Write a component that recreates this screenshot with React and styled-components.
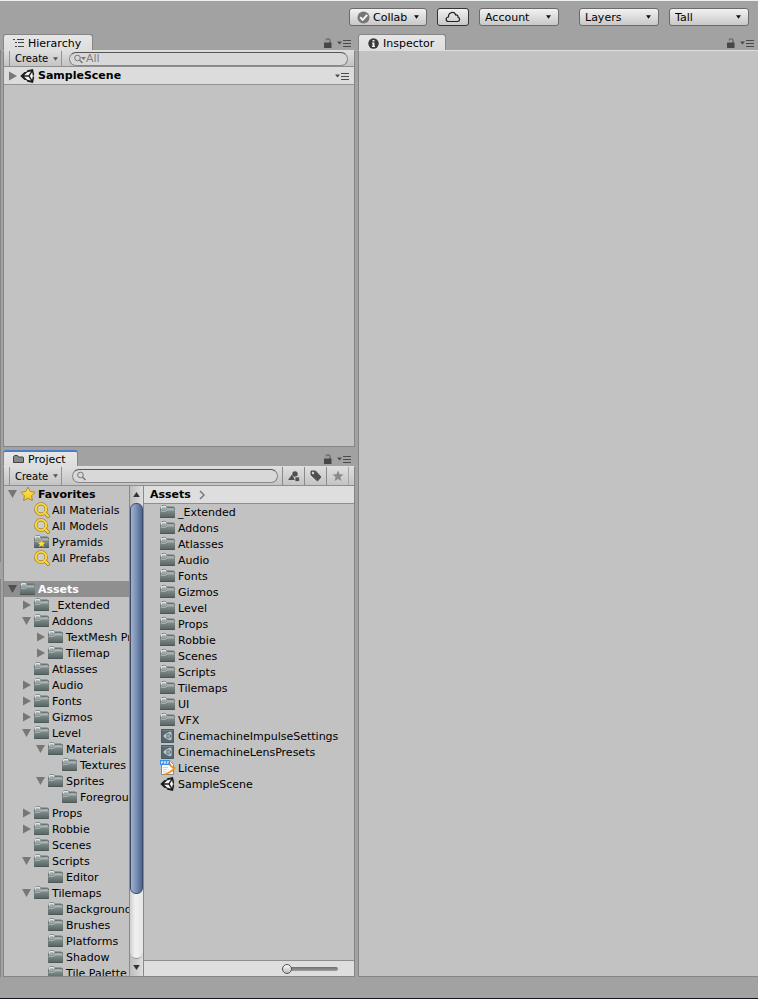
import React from "react";
import styled, { createGlobalStyle, css } from "styled-components";

const GlobalStyle = createGlobalStyle`
  * {
    box-sizing: border-box;
  }
  body {
    margin: 0;
    background: #a2a2a2;
  }
  body, button, input, select {
    font-family: "DejaVu Sans", Verdana, sans-serif;
    font-size: 11px;
    color: #000;
  }
  h1, h2, ul {
    margin: 0;
    padding: 0;
    font-size: 11px;
    list-style: none;
  }
  svg {
    display: block;
    flex: none;
  }
`;

const Editor = styled.div`
  display: grid;
  grid-template-rows: 33px minmax(0, 1fr) 22px;
  height: 100vh;
  border-top: 1px solid #eef0f0;
  background: #a2a2a2;
`;

const TopBar = styled.header`
  display: flex;
  justify-content: flex-end;
  align-items: center;
  gap: 10px;
  padding: 0 9px 1px 0;
`;

const Spacer = styled.span`
  width: 0;
`;

const Workspace = styled.main`
  display: grid;
  grid-template-columns: 3px minmax(0, 352fr) minmax(0, 403fr);
`;

const Footer = styled.footer`
  border-bottom: 1px solid #10141f;
`;

const DockEdge = styled.div`
  display: grid;
  grid-template-rows: 512fr 398fr;
  row-gap: 17px;
  padding-top: 16px;
`;

const DockPane = styled.div`
  width: 1px;
  background: #858585;
`;

const LeftColumn = styled.div`
  display: grid;
  grid-template-rows: minmax(0, 413fr) minmax(0, 527fr);
  row-gap: 3px;
  min-height: 0;
`;

const RightColumn = styled.div`
  display: grid;
  min-height: 0;
  padding-left: 3px;
`;

const Panel = styled.section`
  display: grid;
  grid-template-rows: 16px minmax(0, 1fr);
  min-width: 0;
  min-height: 0;
`;

const PanelBody = styled.div`
  display: flex;
  flex-direction: column;
  min-height: 0;
  min-width: 0;
  border: 1px solid #858585;
  border-top-color: #dedede;
  border-right-width: ${props => (props.$open ? "0" : "1px")};
  background: #c2c2c2;
`;

const TabStrip = styled.div`
  display: flex;
  align-items: flex-end;
  padding-right: 4px;
`;

const Tab = styled.h2`
  display: flex;
  align-items: center;
  gap: 4px;
  height: 16px;
  min-width: ${props => props.$width};
  padding: ${props => (props.$active ? "0" : "1px")} 8px 0 9px;
  border: 1px solid #868686;
  border-top: ${props => (props.$active ? "2px solid #4b7cc4" : "1px solid #868686")};
  border-bottom: 0;
  border-radius: 3px 3px 0 0;
  background: linear-gradient(#e6e6e6, #dedede);
  font-weight: normal;
  white-space: nowrap;
`;

const TabTools = styled.div`
  display: flex;
  align-items: center;
  gap: 5px;
  height: 14px;
  margin-left: auto;
`;

const PlainButton = styled.button`
  display: flex;
  padding: 0;
  border: 0;
  background: none;
`;

const Toolbar = styled.div`
  display: flex;
  align-items: center;
  flex: none;
  height: ${props => props.$height};
  padding-left: 5px;
  border-bottom: 1px solid #8e8e8e;
  background: linear-gradient(#dedede, #c4c4c4);
`;

const raised = css`
  height: 18px;
  border: 1px solid #6b6b6b;
  border-radius: 3px;
  background: linear-gradient(#f2f2f2, #c8c8c8);
`;

const CloudButton = styled.button`
  ${raised}
  display: flex;
  align-items: center;
  justify-content: center;
  width: 32px;
  padding: 0;
  border-color: #333;
`;

const SelectWrap = styled.label`
  position: relative;
  display: flex;
  align-items: center;
  height: 100%;
`;

const BigSelectWrap = styled(SelectWrap)`
  width: ${props => props.$width};
  height: 18px;
`;

const BigSelect = styled.select`
  ${raised}
  appearance: none;
  width: 100%;
  padding: 0 0 0 ${props => (props.$icon ? "23px" : "5px")};
`;

const SmallSelect = styled.select`
  appearance: none;
  width: 53px;
  height: 100%;
  padding: 0 0 0 5px;
  border: 1px solid #929292;
  border-width: 0 1px;
  border-radius: 0;
  background: none;
  font-size: 10px;
`;

const SelectIcon = styled.span`
  position: absolute;
  left: 8px;
  pointer-events: none;
`;

const SelectCaret = styled.span`
  position: absolute;
  right: ${props => props.$right};
  pointer-events: none;
`;

const SearchBox = styled.label`
  display: flex;
  align-items: center;
  flex: 1;
  min-width: 0;
  height: 14px;
  margin: 0 ${props => props.$right} 0 ${props => props.$left};
  padding-left: 4px;
  border: 1px solid #888;
  border-top-color: #555;
  border-radius: 7px;
  background: #d8d8d8;
`;

const SearchInput = styled.input`
  flex: 1;
  min-width: 0;
  height: 12px;
  padding: 0;
  border: 0;
  outline: 0;
  background: none;

  &::placeholder {
    color: #808080;
    opacity: 1;
  }
`;

const FilterButton = styled.button`
  display: flex;
  align-items: center;
  justify-content: center;
  width: 22px;
  height: 100%;
  padding: 0;
  border: 0;
  border-left: 1px solid #8a8a8a;
  background: none;
`;

const ToolbarEnd = styled.span`
  width: 6px;
  height: 100%;
  border-left: 1px solid #a6a6a6;
`;

const SceneRow = styled.div`
  display: flex;
  align-items: center;
  flex: none;
  height: 18px;
  padding: 0 5px 0 4px;
  border-bottom: 1px solid #939393;
  background: #dcdcdc;
  font-weight: bold;
`;

const ProjectSplit = styled.div`
  display: grid;
  grid-template-columns: minmax(0, 125fr) 15px minmax(0, 210fr);
  flex: 1;
  min-height: 0;
`;

const Tree = styled.ul`
  min-height: 0;
  overflow: hidden;
`;

const TreeRow = styled.li`
  display: flex;
  align-items: center;
  height: 16px;
  margin-top: ${props => (props.$root ? "15px" : "0")};
  padding-left: ${props => 4 + props.$level * 14}px;
  background: ${props => (props.$selected ? "#8f8f8f" : "none")};
  color: ${props => (props.$selected ? "#fff" : "#000")};
  font-weight: ${props => (props.$level === 0 ? "bold" : "normal")};
  white-space: nowrap;
`;

const ArrowSlot = styled.span`
  width: 12px;
  flex: none;
`;

const IconSlot = styled.span`
  display: flex;
  align-items: center;
  width: 16px;
  height: 16px;
  margin-right: 2px;
  flex: none;
`;

const ScrollTrack = styled.div`
  display: flex;
  flex-direction: column;
  min-height: 0;
  border: 1px solid #8a8a8a;
  border-width: 0 1px;
  background: linear-gradient(90deg, #bdbdbd, #dedede);
`;

const ScrollButton = styled.button`
  display: flex;
  align-items: center;
  justify-content: center;
  flex: none;
  height: 17px;
  padding: 0;
  border: 0;
  background: none;
`;

const ScrollWell = styled.div`
  flex: 1;
  min-height: 0;
  border: 1px solid #909090;
  border-width: 0 0 1px;
  border-radius: 7px;
  background: linear-gradient(90deg, #cfcfcf, #f0f0f0 40%, #e6e6e6);
`;

const ScrollThumb = styled.div`
  height: 86%;
  border: 1px solid #3b4c6b;
  border-radius: 6px;
  background: linear-gradient(90deg, #a2b2cb, #8095b7 40%, #4d6590);
`;

const AssetPane = styled.div`
  display: flex;
  flex-direction: column;
  min-width: 0;
  min-height: 0;
`;

const Breadcrumb = styled.h1`
  display: flex;
  align-items: center;
  gap: 8px;
  flex: none;
  height: 18px;
  padding-left: 6px;
  border-bottom: 1px solid #8e8e8e;
  background: #dedede;
`;

const AssetList = styled.ul`
  flex: 1;
  min-height: 0;
  overflow: hidden;
`;

const AssetRow = styled.li`
  display: flex;
  align-items: center;
  height: 16px;
  padding-left: 16px;
  white-space: nowrap;
`;

const AssetFooter = styled.div`
  display: flex;
  align-items: center;
  justify-content: flex-end;
  flex: none;
  height: 16px;
  padding-right: 16px;
  border-top: 1px solid #8e8e8e;
  background: #dedede;
`;

const ZoomSlider = styled.input`
  appearance: none;
  width: 56px;
  height: 12px;
  margin: 0;
  background: none;

  &::-webkit-slider-runnable-track {
    height: 4px;
    border-radius: 2px;
    background: linear-gradient(#6e6e6e, #9e9e9e);
  }
  &::-webkit-slider-thumb {
    appearance: none;
    width: 10px;
    height: 10px;
    margin-top: -3px;
    border: 1px solid #555;
    border-radius: 50%;
    background: linear-gradient(#fafafa, #bcbcbc);
  }
`;

const Caret = ({ size = 6, color = "#111" }) => (
  <svg width={size} height="4" viewBox="0 0 6 4">
    <path d="M0 0h6L3 4z" fill={color} />
  </svg>
);

const Arrow = ({ open, dark }) => (
  <svg width="10" height="10" viewBox="0 0 10 10">
    <path d={open ? "M0 1h9L4.500 9z" : "M1 .5v9L9 5z"} fill={dark ? "#505050" : "#777"} />
  </svg>
);

const FolderIcon = ({ starred }) => (
  <svg width="16" height="16" viewBox="0 0 16 16">
    <defs>
      <linearGradient id="folderFront" x1="0" y1="0" x2="0" y2="1">
        <stop offset="0" stopColor="#8b9696" />
        <stop offset="1" stopColor="#5a6767" />
      </linearGradient>
    </defs>
    <path d="M.5 13V4L2 1.500h3.500l1 1.500h7l1 1v9z" fill="#6d7878" stroke="#687373" />
    <path d="M1 5l1-2.500h3.300l1 1.500H14v2H1z" fill="#9ea8a8" />
    <path d="M1 4.500 2 2.500h3.300l.8 1.200" fill="none" stroke="#e2e5e5" strokeWidth="1.400" />
    <path d="M0 6.500h5.500L7 5h8v8H0z" fill="url(#folderFront)" />
    <path d="M1 7.200h4.700L7 5.800h7" fill="none" stroke="#b8c2c2" strokeWidth="1" />
    <path d="M0 13h15v.6l-.5.400H.5L0 13.600z" fill="#4d5959" />
    {starred && (
      <path
        d="m7.500 5.500 1.200 2.700 2.900.3-2.200 1.900.7 2.900-2.600-1.500-2.600 1.500.7-2.900-2.200-1.900 2.900-.3z"
        fill="#ffdc4a"
        stroke="#8d8242"
        strokeWidth=".5"
      />
    )}
  </svg>
);

const StarIcon = () => (
  <svg width="16" height="16" viewBox="0 0 16 16">
    <defs>
      <linearGradient id="starFill" x1="0" y1="0" x2="0" y2="1">
        <stop offset="0" stopColor="#ffec5c" />
        <stop offset="1" stopColor="#f8c416" />
      </linearGradient>
    </defs>
    <path
      d="m8 1 2.200 4.500 4.900.7-3.500 3.500.8 4.900L8 12.300l-4.400 2.300.8-4.900L.9 6.200l4.900-.7z"
      fill="url(#starFill)"
      stroke="#a88c3c"
      strokeLinejoin="round"
    />
  </svg>
);

const QueryIcon = () => (
  <svg width="16" height="16" viewBox="0 0 16 16" fill="none">
    <path d="m10.800 10.800 3.200 3.200" stroke="#94752a" strokeWidth="3.600" strokeLinecap="round" />
    <circle cx="7" cy="7" r="5.200" fill="#cfcfca" stroke="#94752a" strokeWidth="3.300" />
    <path d="m10.500 10.500 3.500 3.500" stroke="#fbd437" strokeWidth="2.400" strokeLinecap="round" />
    <circle cx="7" cy="7" r="5.200" stroke="#fbd437" strokeWidth="2.100" />
  </svg>
);

const UnityShape = ({ base, face }) => (
  <>
    <path d="M13 1 7.300 2.300 6.300 4H4.500L.3 8l4.200 4h1.800l1 1.700L13 15l1.200-5.500L13.300 8l.9-1.500z" fill={base} />
    <path d="M7.300 4.300 11 3.500 8.600 7.200H4.200z" fill={face} />
    <path d="M4.200 8.800h4.400l2.400 3.700-3.700-.8z" fill={face} />
    <path d="m12.100 4.300.8 3.700-.8 3.700L9.800 8z" fill={face} />
  </>
);

const UnityIcon = () => (
  <svg width="16" height="16" viewBox="0 0 16 16">
    <UnityShape base="#1c1c1c" face="#f7f7f7" />
  </svg>
);

const PresetIcon = () => (
  <svg width="16" height="16" viewBox="0 0 16 16">
    <path d="M1.500 1.500h12v13h-12z" fill="#56676f" stroke="#4a5a61" />
    <path d="M2 2.500h11" stroke="#6f8087" />
    <g transform="translate(3 3) scale(.62)">
      <UnityShape base="#c0cbcf" face="#5d6e75" />
    </g>
  </svg>
);

const DocumentIcon = () => (
  <svg width="16" height="16" viewBox="0 0 16 16">
    <path d="M1.500 1.500h9l3 3v10h-12z" fill="#fafafa" stroke="#8a8a8a" />
    <path d="M3 7.500h5M3 9.500h4M3 11.500h3" stroke="#cdd5dd" />
    <path d="M9 3c1 2.500 2.800 4.200 5.500 5C12.500 11 9 13 4 14.500" stroke="#ea8a1a" strokeWidth="1.800" fill="none" />
    <path d="M5 13.500c4-1.300 6.500-3 8-5" stroke="#fbc95a" fill="none" />
    <path d="M0 0h10v5H0z" fill="#3f8fe6" />
    <path d="M1.500 3.800V1.500H3v1.200H1.500M4.500 1.500v2h1.200v-2zM7.500 3.800V1.500H9M7.500 2.700h1.200" stroke="#e4f0fd" strokeWidth=".8" fill="none" />
  </svg>
);

const LockIcon = () => (
  <svg width="8" height="10" viewBox="0 0 8 10">
    <path d="M2 2.500C2 .3 6 .1 6 2.500V5" fill="none" stroke="#606060" strokeWidth="1.200" />
    <path d="M0 4.500h7.500V10H0z" fill="#474747" />
  </svg>
);

const MenuIcon = () => (
  <svg width="14" height="8" viewBox="0 0 14 8">
    <path d="M0 2.500h5l-2.500 3z" fill="#4a4a4a" />
    <path d="M6 1.500h8M6 4.500h8M6 7.500h8" stroke="#4a4a4a" />
  </svg>
);

const SearchIcon = ({ menu }) => (
  <svg width={menu ? 12 : 10} height="10" viewBox={menu ? "0 0 12 10" : "0 0 10 10"} fill="none">
    <circle cx="3.500" cy="4" r="2.800" stroke="#777" />
    <path d="m5.500 6 3 3" stroke="#777" strokeWidth="1.500" />
    {menu && <path d="M7 3h5L9.500 6z" fill="#777" />}
  </svg>
);

const HierarchyIcon = () => (
  <svg width="11" height="10" viewBox="0 0 11 10" stroke="#444">
    <path d="M0 1.500h2M4 1.500h7M2 4.500h2M5 4.500h6M2 8.500h2M5 8.500h6" />
  </svg>
);

const InspectorIcon = () => (
  <svg width="11" height="11" viewBox="0 0 11 11">
    <circle cx="5.500" cy="5.500" r="5.200" fill="#383838" />
    <path d="M4.500 2h2v1.500h-2zM4 4.500h2.500V8H7v1H4V8h.5V5.500H4z" fill="#eee" />
  </svg>
);

const ProjectIcon = () => (
  <svg width="11" height="10" viewBox="0 0 11 10">
    <path d="M.5 8.500v-6l1-1h3l1 1.500h4.500l.5.500v5z" fill="#888" stroke="#444" />
  </svg>
);

const CollabIcon = () => (
  <svg width="13" height="13" viewBox="0 0 13 13">
    <circle cx="6.500" cy="6.500" r="6" fill="#777" />
    <path d="m3.200 6.300 2.500 2.600 4.500-5" fill="none" stroke="#f5f5f5" strokeWidth="2" />
  </svg>
);

const CloudIcon = () => (
  <svg width="16" height="12" viewBox="0 0 16 12">
    <path
      d="M3.700 10.500C.3 10.500.3 6.300 3.500 6 3.200 1.200 9.300-.3 10.700 4c2.300-.3 2.500 1.700 2.400 2.400 2.300.5 1.900 4.100-.6 4.100z"
      fill="none"
      stroke="#222"
      strokeWidth="1.200"
    />
  </svg>
);

const TypeFilterIcon = () => (
  <svg width="12" height="11" viewBox="0 0 12 11" fill="#505050">
    <path d="M4 3.500 7 9H0z" />
    <circle cx="7" cy="3" r="2.700" />
    <path d="M7 6h4.500v4.500H7z" stroke="#d0d0d0" strokeWidth=".7" />
  </svg>
);

const LabelFilterIcon = () => (
  <svg width="12" height="12" viewBox="0 0 12 12">
    <path d="M1 1h4.500L11 7l-3.500 4L1 5z" fill="#505050" stroke="#505050" strokeLinejoin="round" />
    <circle cx="3" cy="3" r="1.200" fill="#d5d5d5" />
  </svg>
);

const SaveFilterIcon = () => (
  <svg width="12" height="12" viewBox="0 0 12 12">
    <path d="m6 .5 1.500 3.800 4 .2-3.100 2.600 1 4L6 8.900l-3.400 2.200 1-4L.5 4.500l4-.2z" fill="#8b8b8b" />
  </svg>
);

const icons = {
  folder: <FolderIcon />,
  saved: <FolderIcon starred />,
  star: <StarIcon />,
  query: <QueryIcon />,
  scene: <UnityIcon />,
  preset: <PresetIcon />,
  document: <DocumentIcon />
};

// [name, level, arrow, icon]
const tree = [
  ["Favorites", 0, "open", "star"],
  ["All Materials", 1, "", "query"],
  ["All Models", 1, "", "query"],
  ["Pyramids", 1, "", "saved"],
  ["All Prefabs", 1, "", "query"],
  ["Assets", 0, "open", "folder"],
  ["_Extended", 1, "closed", "folder"],
  ["Addons", 1, "open", "folder"],
  ["TextMesh Pro", 2, "closed", "folder"],
  ["Tilemap", 2, "closed", "folder"],
  ["Atlasses", 1, "", "folder"],
  ["Audio", 1, "closed", "folder"],
  ["Fonts", 1, "closed", "folder"],
  ["Gizmos", 1, "closed", "folder"],
  ["Level", 1, "open", "folder"],
  ["Materials", 2, "open", "folder"],
  ["Textures", 3, "", "folder"],
  ["Sprites", 2, "open", "folder"],
  ["Foreground", 3, "", "folder"],
  ["Props", 1, "closed", "folder"],
  ["Robbie", 1, "closed", "folder"],
  ["Scenes", 1, "", "folder"],
  ["Scripts", 1, "open", "folder"],
  ["Editor", 2, "", "folder"],
  ["Tilemaps", 1, "open", "folder"],
  ["Background", 2, "", "folder"],
  ["Brushes", 2, "", "folder"],
  ["Platforms", 2, "", "folder"],
  ["Shadow", 2, "", "folder"],
  ["Tile Palette", 2, "", "folder"]
];

const folders = [
  "_Extended",
  "Addons",
  "Atlasses",
  "Audio",
  "Fonts",
  "Gizmos",
  "Level",
  "Props",
  "Robbie",
  "Scenes",
  "Scripts",
  "Tilemaps",
  "UI",
  "VFX"
];

const assets = [
  ...folders.map(name => [name, "folder"]),
  ["CinemachineImpulseSettings", "preset"],
  ["CinemachineLensPresets", "preset"],
  ["License", "document"],
  ["SampleScene", "scene"]
];

const Dropdown = ({ label, width, icon }) => (
  <BigSelectWrap $width={width}>
    <BigSelect aria-label={label} $icon={Boolean(icon)}>
      <option>{label}</option>
    </BigSelect>
    {icon && <SelectIcon>{icon}</SelectIcon>}
    <SelectCaret $right="8px">
      <Caret size={5} />
    </SelectCaret>
  </BigSelectWrap>
);

const CreateMenu = () => (
  <SelectWrap>
    <SmallSelect aria-label="Create">
      <option>Create</option>
    </SmallSelect>
    <SelectCaret $right="4px">
      <Caret size={5} color="#555" />
    </SelectCaret>
  </SelectWrap>
);

const PanelTabs = ({ title, icon, width, active }) => (
  <TabStrip>
    <Tab $width={width} $active={active}>
      {icon}
      {title}
    </Tab>
    <TabTools>
      <PlainButton aria-label={`Lock ${title}`}>
        <LockIcon />
      </PlainButton>
      <PlainButton aria-label={`${title} menu`}>
        <MenuIcon />
      </PlainButton>
    </TabTools>
  </TabStrip>
);

const Hierarchy = () => (
  <Panel>
    <PanelTabs title="Hierarchy" icon={<HierarchyIcon />} width="90px" />
    <PanelBody>
      <Toolbar $height="16px">
        <CreateMenu />
        <SearchBox $left="7px" $right="6px">
          <SearchIcon menu />
          <SearchInput aria-label="Search hierarchy" placeholder="All" />
        </SearchBox>
      </Toolbar>
      <SceneRow>
        <ArrowSlot>
          <Arrow />
        </ArrowSlot>
        <IconSlot>
          <UnityIcon />
        </IconSlot>
        SampleScene
        <TabTools>
          <PlainButton aria-label="Scene menu">
            <MenuIcon />
          </PlainButton>
        </TabTools>
      </SceneRow>
    </PanelBody>
  </Panel>
);

const Project = () => (
  <Panel>
    <PanelTabs title="Project" icon={<ProjectIcon />} width="75px" active />
    <PanelBody>
      <Toolbar $height="19px">
        <CreateMenu />
        <SearchBox $left="10px" $right="4px">
          <SearchIcon />
          <SearchInput aria-label="Search project" />
        </SearchBox>
        <FilterButton aria-label="Search by type">
          <TypeFilterIcon />
        </FilterButton>
        <FilterButton aria-label="Search by label">
          <LabelFilterIcon />
        </FilterButton>
        <FilterButton aria-label="Save search">
          <SaveFilterIcon />
        </FilterButton>
        <ToolbarEnd />
      </Toolbar>
      <ProjectSplit>
        <Tree>
          {tree.map(([name, level, arrow, icon]) => (
            <TreeRow
              key={name}
              $level={level}
              $root={name === "Assets"}
              $selected={name === "Assets"}
            >
              <ArrowSlot>
                {arrow && <Arrow open={arrow === "open"} dark={name === "Assets"} />}
              </ArrowSlot>
              <IconSlot>{icons[icon]}</IconSlot>
              {name}
            </TreeRow>
          ))}
        </Tree>
        <ScrollTrack>
          <ScrollButton aria-label="Scroll up">
            <svg width="7" height="5" viewBox="0 0 8 6">
              <path d="M0 6h8L4 0z" fill="#333" />
            </svg>
          </ScrollButton>
          <ScrollWell>
            <ScrollThumb />
          </ScrollWell>
          <ScrollButton aria-label="Scroll down">
            <svg width="7" height="5" viewBox="0 0 8 6">
              <path d="M0 0h8L4 6z" fill="#333" />
            </svg>
          </ScrollButton>
        </ScrollTrack>
        <AssetPane>
          <Breadcrumb>
            Assets
            <svg width="6" height="10" viewBox="0 0 6 10">
              <path d="m1 1 4 4-4 4" fill="none" stroke="#777" strokeWidth="1.500" />
            </svg>
          </Breadcrumb>
          <AssetList>
            {assets.map(([name, icon]) => (
              <AssetRow key={name}>
                <IconSlot>{icons[icon]}</IconSlot>
                {name}
              </AssetRow>
            ))}
          </AssetList>
          <AssetFooter>
            <ZoomSlider type="range" min="0" max="100" defaultValue="0" aria-label="Icon size" />
          </AssetFooter>
        </AssetPane>
      </ProjectSplit>
    </PanelBody>
  </Panel>
);

const Inspector = () => (
  <Panel>
    <PanelTabs title="Inspector" icon={<InspectorIcon />} width="88px" />
    <PanelBody $open />
  </Panel>
);

const App = () => (
  <>
    <GlobalStyle />
    <Editor>
      <TopBar>
        <Dropdown label="Collab" width="78px" icon={<CollabIcon />} />
        <CloudButton aria-label="Cloud services">
          <CloudIcon />
        </CloudButton>
        <Dropdown label="Account" width="80px" />
        <Spacer />
        <Dropdown label="Layers" width="80px" />
        <Dropdown label="Tall" width="80px" />
      </TopBar>
      <Workspace>
        <DockEdge>
          <DockPane />
          <DockPane />
        </DockEdge>
        <LeftColumn>
          <Hierarchy />
          <Project />
        </LeftColumn>
        <RightColumn>
          <Inspector />
        </RightColumn>
      </Workspace>
      <Footer />
    </Editor>
  </>
);

export default App;
